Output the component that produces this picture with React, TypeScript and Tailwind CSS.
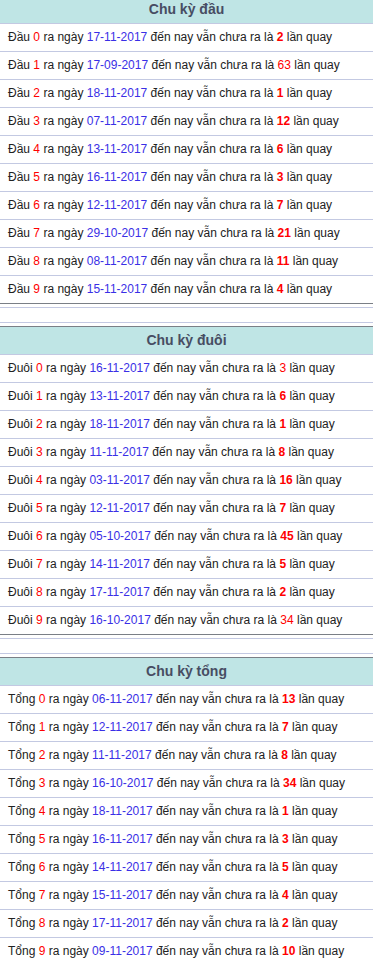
type Row = { n: number; date: string; count: number; bold?: boolean };

const sections: { title: string; label: string; rows: Row[] }[] = [
  {
    title: "Chu kỳ đầu",
    label: "Đầu",
    rows: [
      { n: 0, date: "17-11-2017", count: 2, bold: true },
      { n: 1, date: "17-09-2017", count: 63 },
      { n: 2, date: "18-11-2017", count: 1, bold: true },
      { n: 3, date: "07-11-2017", count: 12, bold: true },
      { n: 4, date: "13-11-2017", count: 6, bold: true },
      { n: 5, date: "16-11-2017", count: 3, bold: true },
      { n: 6, date: "12-11-2017", count: 7, bold: true },
      { n: 7, date: "29-10-2017", count: 21, bold: true },
      { n: 8, date: "08-11-2017", count: 11, bold: true },
      { n: 9, date: "15-11-2017", count: 4, bold: true },
    ],
  },
  {
    title: "Chu kỳ đuôi",
    label: "Đuôi",
    rows: [
      { n: 0, date: "16-11-2017", count: 3 },
      { n: 1, date: "13-11-2017", count: 6, bold: true },
      { n: 2, date: "18-11-2017", count: 1, bold: true },
      { n: 3, date: "11-11-2017", count: 8, bold: true },
      { n: 4, date: "03-11-2017", count: 16, bold: true },
      { n: 5, date: "12-11-2017", count: 7, bold: true },
      { n: 6, date: "05-10-2017", count: 45, bold: true },
      { n: 7, date: "14-11-2017", count: 5, bold: true },
      { n: 8, date: "17-11-2017", count: 2, bold: true },
      { n: 9, date: "16-10-2017", count: 34 },
    ],
  },
  {
    title: "Chu kỳ tổng",
    label: "Tổng",
    rows: [
      { n: 0, date: "06-11-2017", count: 13, bold: true },
      { n: 1, date: "12-11-2017", count: 7, bold: true },
      { n: 2, date: "11-11-2017", count: 8, bold: true },
      { n: 3, date: "16-10-2017", count: 34, bold: true },
      { n: 4, date: "18-11-2017", count: 1, bold: true },
      { n: 5, date: "16-11-2017", count: 3, bold: true },
      { n: 6, date: "14-11-2017", count: 5, bold: true },
      { n: 7, date: "15-11-2017", count: 4, bold: true },
      { n: 8, date: "17-11-2017", count: 2, bold: true },
      { n: 9, date: "09-11-2017", count: 10, bold: true },
    ],
  },
];

function Section({ title, label, rows, first }: { title: string; label: string; rows: Row[]; first?: boolean }) {
  return (
    <div className={first ? "-mt-[4px]" : ""}>
      <div
        className={`flex items-center justify-center bg-[#bfe5e5] border-b border-[#c3c9e2] text-[14px] font-bold text-[#474d63] ${
          first ? "h-[28px]" : "h-[29px] border-t border-t-[#7a7f86]"
        }`}
      >
        {title}
      </div>
      {rows.map((r, i) => (
        <div
          key={i}
          className={`h-[28px] flex items-center pl-[8px] pb-[2px] text-[12px] text-[#222] whitespace-nowrap border-b ${
            i === rows.length - 1 ? "border-[#7a7f86]" : "border-[#c3c9e2]"
          }`}
        >
          <span>
            {label} <span className="text-[#ff0000]">{r.n}</span> ra ngày{" "}
            <span className="text-[#3a2fe6]">{r.date}</span> đến nay vẫn chưa ra là{" "}
            <span className={`text-[#ff0000] ${r.bold ? "font-bold" : ""}`}>{r.count}</span> lần quay
          </span>
        </div>
      ))}
    </div>
  );
}

export default function App() {
  return (
    <div className="w-[373px] bg-white font-['Liberation_Sans',Arial,sans-serif] overflow-hidden">
      {sections.map((s, i) => (
        <div key={i}>
          {i > 0 && (
            <div className="pt-[3px] pb-[3px]">
              <div className="h-[16px] border-y border-[#c3c9e2]" />
            </div>
          )}
          <Section title={s.title} label={s.label} rows={s.rows} first={i === 0} />
        </div>
      ))}
    </div>
  );
}
